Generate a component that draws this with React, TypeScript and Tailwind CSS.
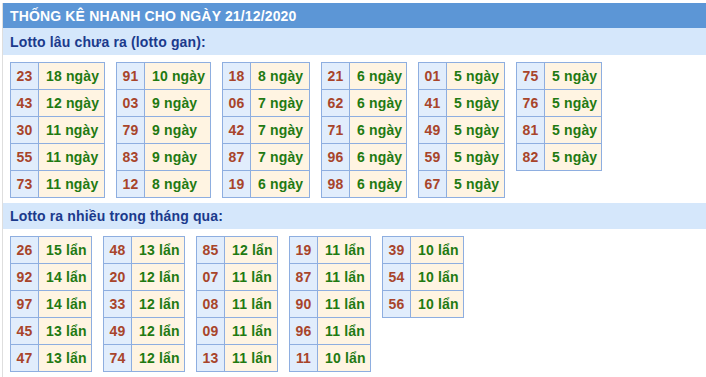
type Row = [string, string];

const ganTables: { w: string; rows: Row[] }[] = [
  { w: "w-[95px]", rows: [["23", "18"], ["43", "12"], ["30", "11"], ["55", "11"], ["73", "11"]] },
  { w: "w-[95px]", rows: [["91", "10"], ["03", "9"], ["79", "9"], ["83", "9"], ["12", "8"]] },
  { w: "w-[88px]", rows: [["18", "8"], ["06", "7"], ["42", "7"], ["87", "7"], ["19", "6"]] },
  { w: "w-[86px]", rows: [["21", "6"], ["62", "6"], ["71", "6"], ["96", "6"], ["98", "6"]] },
  { w: "w-[87px]", rows: [["01", "5"], ["41", "5"], ["49", "5"], ["59", "5"], ["67", "5"]] },
  { w: "w-[86px]", rows: [["75", "5"], ["76", "5"], ["81", "5"], ["82", "5"]] },
];

const hotTables: { w: string; rows: Row[] }[] = [
  { w: "w-[82px]", rows: [["26", "15"], ["92", "14"], ["97", "14"], ["45", "13"], ["47", "13"]] },
  { w: "w-[82px]", rows: [["48", "13"], ["20", "12"], ["33", "12"], ["49", "12"], ["74", "12"]] },
  { w: "w-[82px]", rows: [["85", "12"], ["07", "11"], ["08", "11"], ["09", "11"], ["13", "11"]] },
  { w: "w-[82px]", rows: [["19", "11"], ["87", "11"], ["90", "11"], ["96", "11"], ["11", "10"]] },
  { w: "w-[82px]", rows: [["39", "10"], ["54", "10"], ["56", "10"]] },
];

function StatTable({ rows, unit, w }: { rows: Row[]; unit: string; w: string }) {
  return (
    <table className={`${w} shrink-0 table-fixed border-collapse`}>
      <colgroup>
        <col className="w-[28px]" />
        <col />
      </colgroup>
      <tbody>
        {rows.map(([num, count]) => (
          <tr key={num} className="h-[27px]">
            <td className="border border-[#8eaee0] bg-[#e1edfc] p-0 text-center text-[#a8442a]">
              {num}
            </td>
            <td className="whitespace-nowrap border border-[#8eaee0] bg-[#fff4e2] py-0 pl-[7px] pr-0 text-[#1f7a12]">
              {count} {unit}
            </td>
          </tr>
        ))}
      </tbody>
    </table>
  );
}

function SectionHeader({ title, h }: { title: string; h: string }) {
  return (
    <div className={`flex ${h} items-center bg-[#d5e7fb] px-[7px] text-[#1b3a8c]`}>
      {title}
    </div>
  );
}

export default function App() {
  return (
    <div className="h-[377px] w-[706px] overflow-hidden bg-white pt-[3px] pl-[2px] font-['Liberation_Sans',Arial,sans-serif] text-[14px] font-bold leading-none tracking-[0.15px]">
      <div className="h-full border-l border-[#dedede]">
        <div className="flex h-[25px] items-center bg-[#5c96d6] px-[7px] text-white">
          THỐNG KÊ NHANH CHO NGÀY 21/12/2020
        </div>
        <SectionHeader h="h-[27px]" title="Lotto lâu chưa ra (lotto gan):" />
        <div className="flex items-start gap-[11px] px-[7px] pt-[7px] pb-[5px]">
          {ganTables.map((t, i) => (
            <StatTable key={i} rows={t.rows} w={t.w} unit="ngày" />
          ))}
        </div>
        <SectionHeader h="h-[26px]" title="Lotto ra nhiều trong tháng qua:" />
        <div className="flex items-start gap-[11px] px-[7px] pt-[7px]">
          {hotTables.map((t, i) => (
            <StatTable key={i} rows={t.rows} w={t.w} unit="lẩn" />
          ))}
        </div>
      </div>
    </div>
  );
}
